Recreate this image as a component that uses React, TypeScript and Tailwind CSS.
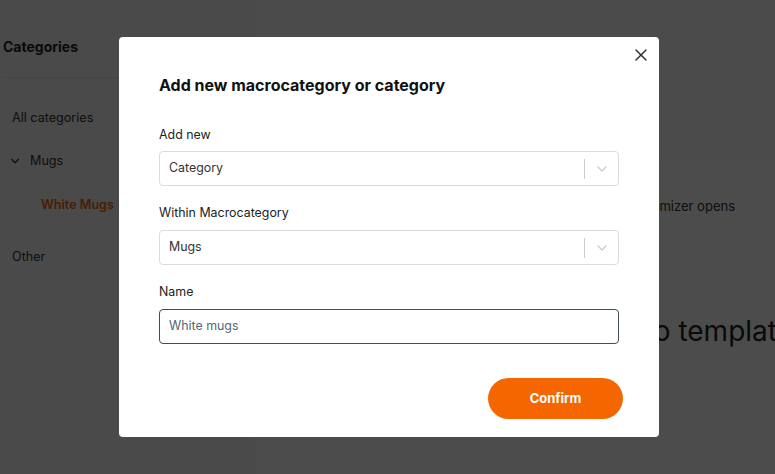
import { X, ChevronDown } from "lucide-react";

function SelectBox({ value }: { value: string }) {
  return (
    <div className="flex h-[35px] items-center rounded-[4px] border border-[#dcdcdc] bg-white">
      <span className="flex-1 pl-[9px] text-[12.4px] text-[#333333]">{value}</span>
      <span className="h-[20px] w-px bg-[#cccccc]" />
      <span className="flex w-[33px] items-center justify-center">
        <ChevronDown className="size-[16px] text-[#cccccc]" strokeWidth={2} />
      </span>
    </div>
  );
}

export default function App() {
  return (
    <div className="relative h-[474px] w-[775px] overflow-hidden font-['Inter',sans-serif]">
      <div className="flex h-full">
        <aside className="w-[255px] bg-[#f7f7f7] pl-[3px]">
          <div className="flex h-[78px] items-center border-b border-[#e5e5e5] pt-[16px] text-[14px] font-bold text-[#222222]">
            Categories
          </div>
          <div className="pl-[9px] text-[12.6px] text-[#333333]">
            <div className="mt-[30px] leading-[20px]">All categories</div>
            <div className="mt-[23px] flex items-center leading-[20px]">
              <ChevronDown className="-ml-[4px] size-[14px] text-[#333333]" strokeWidth={2} />
              <span className="ml-[8px]">Mugs</span>
            </div>
            <div className="mt-[24px] pl-[29px] font-semibold leading-[20px] text-[#f56600]">White Mugs</div>
            <div className="mt-[32px] leading-[20px]">Other</div>
          </div>
        </aside>
        <main className="flex flex-1 flex-col">
          <div className="h-[160px] bg-[#fafafa]" />
          <div className="flex-1 bg-white">
            <div className="mt-[37px] pr-[40px] text-right text-[13px] text-[#333333]">Choose how the customizer opens</div>
            <div className="-mr-[18px] mt-[93px] whitespace-nowrap text-right text-[28px] text-[#222222]">Add category to template</div>
          </div>
        </main>
      </div>

      <div className="absolute inset-0 flex items-start bg-black/70 pl-[119px] pt-[37px]">
        <div className="relative h-[400px] w-[540px] rounded-[4px] bg-white px-[40px] pt-[38px]">
          <button className="absolute right-[8px] top-[8px] flex size-[20px] items-center justify-center text-[#333333]">
            <X className="size-[20px]" strokeWidth={1.8} />
          </button>
          <h2 className="text-[16px] font-bold leading-[20px] text-[#111111]">Add new macrocategory or category</h2>

          <div className="mt-[31px] text-[12.4px] leading-[18px] text-[#222222]">Add new</div>
          <div className="mt-[7px]">
            <SelectBox value="Category" />
          </div>

          <div className="mt-[18px] text-[12.4px] leading-[18px] text-[#222222]">Within Macrocategory</div>
          <div className="mt-[8px]">
            <SelectBox value="Mugs" />
          </div>

          <div className="mt-[18px] text-[12.4px] leading-[18px] text-[#222222]">Name</div>
          <div className="mt-[8px] flex h-[35px] items-center rounded-[4px] border border-[#3e4f5b] pl-[9px] text-[12.4px] text-[#51687a]">
            White mugs
          </div>

          <div className="mt-[34px] flex justify-end">
            <button className="-mr-[4px] h-[41px] w-[135px] rounded-full bg-[#f56600] text-[13px] font-bold text-white">
              Confirm
            </button>
          </div>
        </div>
      </div>
    </div>
  );
}
